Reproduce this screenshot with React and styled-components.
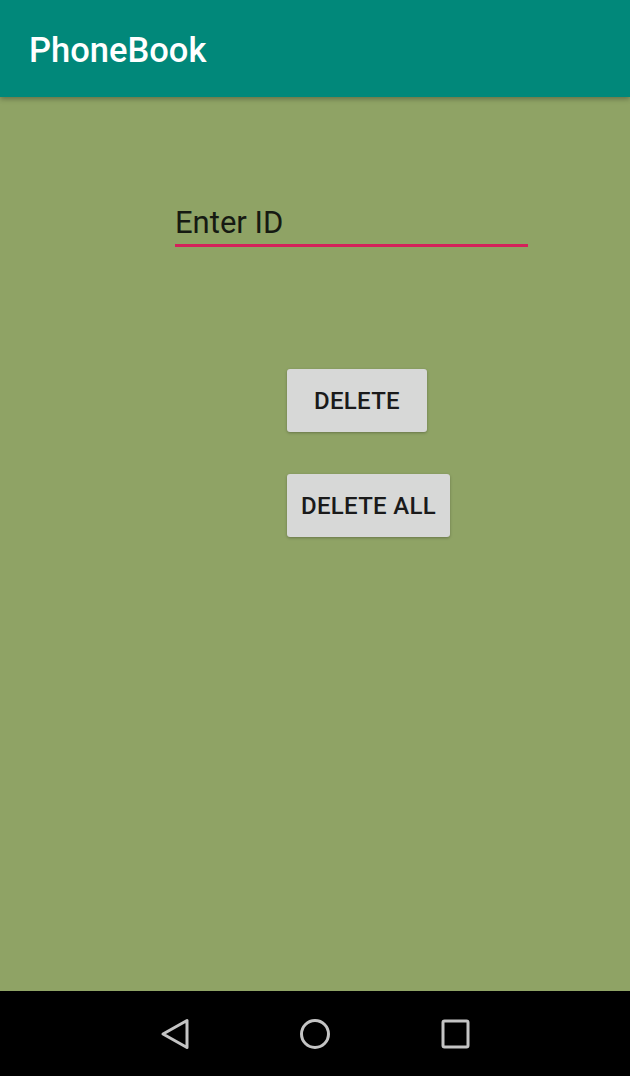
import React from 'react';
import styled, { createGlobalStyle } from 'styled-components';

const GlobalStyle = createGlobalStyle`
  html, body {
    margin: 0;
    padding: 0;
    height: 100%;
  }
  body {
    font-family: Roboto, "Liberation Sans", Arial, sans-serif;
  }
  #root {
    height: 100%;
  }
`;

const Screen = styled.div`
  display: flex;
  flex-direction: column;
  width: 630px;
  height: 1076px;
  background-color: #8fa365;
  overflow: hidden;
`;

const AppBar = styled.header`
  position: relative;
  z-index: 1;
  display: flex;
  align-items: center;
  flex: 0 0 97px;
  padding: 2px 29px 0;
  box-sizing: border-box;
  background-color: #01887a;
  box-shadow: 0 2px 5px rgba(0, 0, 0, 0.3);
`;

const Title = styled.h1`
  margin: 0;
  font-size: 34.5px;
  font-weight: 500;
  color: #ffffff;
`;

const Content = styled.main`
  flex: 1;
  display: flex;
  flex-direction: column;
  padding-top: 105px;
`;

const IdInput = styled.input`
  width: 353px;
  height: 45px;
  margin-left: 175px;
  padding: 0 0 2px;
  box-sizing: border-box;
  border: none;
  border-bottom: 3px solid #d4215a;
  background: transparent;
  font-family: Roboto, "Liberation Sans", Arial, sans-serif;
  font-size: 31px;
  line-height: 40px;
  color: #161a12;
  outline: none;

  &::placeholder {
    color: #161a12;
    opacity: 1;
  }
`;

const Actions = styled.div`
  display: flex;
  flex-direction: column;
  align-items: flex-start;
  gap: 42px;
  margin: 122px 0 0 287px;
`;

const Button = styled.button`
  min-width: 140px;
  height: 63px;
  padding: 0 14px;
  border: none;
  border-radius: 3px;
  background-color: #d7d8d7;
  box-shadow: 0 1px 3px rgba(0, 0, 0, 0.28);
  font-family: Roboto, "Liberation Sans", Arial, sans-serif;
  font-size: 24px;
  font-weight: 500;
  letter-spacing: 0.3px;
  color: #1a1a1a;
  text-transform: uppercase;
  cursor: pointer;
`;

const NavBar = styled.nav`
  flex: 0 0 85px;
  display: flex;
  justify-content: center;
  align-items: center;
  background-color: #000000;
`;

const NavSlot = styled.div`
  width: 140px;
  display: flex;
  justify-content: center;
  align-items: center;
`;

const navStroke = { stroke: '#c4c4c4', strokeWidth: 3, fill: 'none', strokeLinejoin: 'round' };

const App = () => {
  return (
    <>
      <GlobalStyle />
      <Screen>
        <AppBar>
          <Title>PhoneBook</Title>
        </AppBar>
        <Content>
          <IdInput placeholder="Enter ID" />
          <Actions>
            <Button>Delete</Button>
            <Button>Delete All</Button>
          </Actions>
        </Content>
        <NavBar>
          <NavSlot>
            <svg width="32" height="34" viewBox="0 0 32 34">
              <path d="M4 17 L28 3.5 L28 30.5 Z" {...navStroke} />
            </svg>
          </NavSlot>
          <NavSlot>
            <svg width="32" height="32" viewBox="0 0 32 32">
              <circle cx="16" cy="16" r="13.5" {...navStroke} />
            </svg>
          </NavSlot>
          <NavSlot>
            <svg width="30" height="30" viewBox="0 0 30 30">
              <rect x="3" y="2" width="25" height="26" rx="1.5" {...navStroke} />
            </svg>
          </NavSlot>
        </NavBar>
      </Screen>
    </>
  );
};

export default App;
